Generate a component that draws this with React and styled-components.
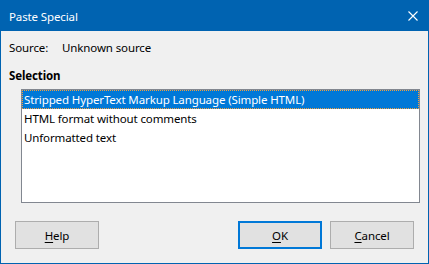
import React from 'react';
import styled, { createGlobalStyle } from 'styled-components';

const GlobalStyle = createGlobalStyle`
  html, body {
    margin: 0;
    padding: 0;
    background: #f0f0f0;
  }
  body {
    font-family: "Noto Sans", "Open Sans", sans-serif;
    font-size: 11.5px;
    letter-spacing: -0.12px;
    color: #000;
  }
`;

const Window = styled.div`
  box-sizing: border-box;
  width: 429px;
  height: 264px;
  border: 1px solid #0063b1;
  background: #f0f0f0;
  display: flex;
  flex-direction: column;
`;

const TitleBar = styled.div`
  height: 30px;
  flex-shrink: 0;
  background: #0063b1;
  color: #fff;
  display: flex;
  align-items: center;
  justify-content: space-between;
  padding: 0 10px 0 8px;
  font-size: 11.5px;
`;

const CloseIcon = () => (
  <svg width="10" height="10" viewBox="0 0 10 10">
    <path d="M0.5 0.5 L9.5 9.5 M9.5 0.5 L0.5 9.5" stroke="#fff" strokeWidth="1.1" fill="none" />
  </svg>
);

const Body = styled.div`
  flex: 1;
  display: flex;
  flex-direction: column;
  padding: 8px 8px 0 8px;
`;

const SourceRow = styled.div`
  display: flex;
  height: 18px;
  align-items: center;
  line-height: 18px;
`;

const SourceLabel = styled.span`
  width: 53px;
`;

const SectionLabel = styled.div`
  margin-top: 10px;
  height: 18px;
  line-height: 18px;
  font-weight: bold;
`;

const ListBox = styled.div`
  box-sizing: border-box;
  margin: 4px 0 0 12px;
  height: 114px;
  border: 1px solid #828790;
  background: #fff;
  display: flex;
  flex-direction: column;
`;

const ListItem = styled.div`
  box-sizing: border-box;
  height: 19px;
  line-height: 19px;
  padding-left: 2px;
  white-space: nowrap;
  background: ${(p) => (p.$selected ? '#0078d7' : 'transparent')};
  color: ${(p) => (p.$selected ? '#fff' : '#000')};
  outline: ${(p) => (p.$selected ? '1px dotted #f0a040' : 'none')};
  outline-offset: -1px;
`;

const Footer = styled.div`
  display: flex;
  align-items: center;
  margin-top: 18px;
  padding: 0 6px;
  gap: 8px;
`;

const Spacer = styled.div`
  flex: 1;
`;

const Button = styled.button`
  box-sizing: border-box;
  width: 84px;
  height: 28px;
  margin: 0;
  padding: 0;
  font-family: inherit;
  font-size: 11.5px;
  letter-spacing: inherit;
  color: #000;
  background: #e1e1e1;
  border: ${(p) => (p.$default ? '2px solid #0078d7' : '1px solid #adadad')};

  u {
    text-decoration: underline;
    text-underline-offset: 2px;
  }
`;

const items = [
  'Stripped HyperText Markup Language (Simple HTML)',
  'HTML format without comments',
  'Unformatted text',
];

export default function App() {
  return (
    <>
      <GlobalStyle />
      <Window>
        <TitleBar>
          <span>Paste Special</span>
          <CloseIcon />
        </TitleBar>
        <Body>
          <SourceRow>
            <SourceLabel>Source:</SourceLabel>
            <span>Unknown source</span>
          </SourceRow>
          <SectionLabel>Selection</SectionLabel>
          <ListBox>
            {items.map((t, i) => (
              <ListItem key={t} $selected={i === 0}>{t}</ListItem>
            ))}
          </ListBox>
          <Footer>
            <Button><u>H</u>elp</Button>
            <Spacer />
            <Button $default><u>O</u>K</Button>
            <Button><u>C</u>ancel</Button>
          </Footer>
        </Body>
      </Window>
    </>
  );
}
